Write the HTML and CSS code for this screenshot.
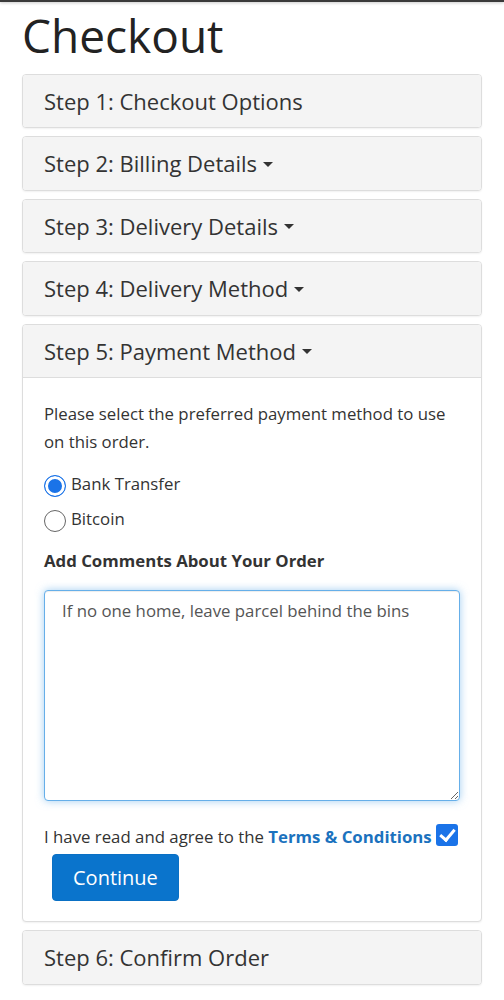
FILE: index.html
```html
<!DOCTYPE html>
<html lang="en">
<head>
<meta charset="utf-8">
<title>Checkout</title>
<link rel="stylesheet" href="styles.css">
</head>
<body>
<div class="topline"></div>
<main class="page">
  <h1 class="title">Checkout</h1>

  <section class="panel">
    <div class="panel-head">Step 1: Checkout Options</div>
  </section>
  <section class="panel">
    <div class="panel-head">Step 2: Billing Details <span class="caret"></span></div>
  </section>
  <section class="panel">
    <div class="panel-head">Step 3: Delivery Details <span class="caret"></span></div>
  </section>
  <section class="panel">
    <div class="panel-head">Step 4: Delivery Method <span class="caret"></span></div>
  </section>
  <section class="panel">
    <div class="panel-head panel-head-open">Step 5: Payment Method <span class="caret"></span></div>
    <div class="panel-body">
      <p class="intro">Please select the preferred payment method to use on this order.</p>
      <div class="radios">
        <label class="radio-row"><input class="radio" type="radio" name="pay" checked> <span>Bank Transfer</span></label>
        <label class="radio-row"><input class="radio" type="radio" name="pay"> <span>Bitcoin</span></label>
      </div>
      <div class="comment-label">Add Comments About Your Order</div>
      <textarea class="comment" rows="8">If no one home, leave parcel behind the bins</textarea>
      <div class="agree">I have read and agree to the <a class="terms" href="#">Terms &amp; Conditions</a> <input class="check" type="checkbox" checked></div>
      <div class="actions"><button class="btn" type="button">Continue</button></div>
    </div>
  </section>
  <section class="panel">
    <div class="panel-head">Step 6: Confirm Order</div>
  </section>
</main>
</body>
</html>
```
FILE: styles.css
```css
html, body {
  margin: 0;
  padding: 0;
  background: #fff;
}
body {
  font-family: "Open Sans", "Noto Sans", sans-serif;
  color: #333;
}
.topline {
  height: 2px;
  background: #3a3a3a;
  box-shadow: 0 1px 3px rgba(0, 0, 0, 0.25);
}
.page {
  padding: 0 22px 20px;
}
.title {
  font-size: 46px;
  font-weight: 400;
  line-height: 1.1;
  color: #222;
  margin: 8px 0 13px;
}
.panel {
  border: 1px solid #ddd;
  border-radius: 4px;
  background: #fff;
  box-shadow: 0 1px 2px rgba(0, 0, 0, 0.06);
  margin-bottom: 8px;
  overflow: hidden;
}
.panel-head {
  background: #f4f4f4;
  font-size: 22px;
  line-height: 24.5px;
  padding: 14px 21px;
  color: #333;
}
.panel-head-open {
  border-bottom: 1px solid #ddd;
}
.caret {
  display: inline-block;
  width: 0;
  height: 0;
  border-left: 5px solid transparent;
  border-right: 5px solid transparent;
  border-top: 5px solid #333;
  vertical-align: middle;
  position: relative;
  top: -2px;
}
.panel-body {
  padding: 22px 21px 20px;
  font-size: 16.8px;
  line-height: 28px;
}
.intro {
  margin: 0 0 14px;
}
.radios {
  display: flex;
  flex-direction: column;
  gap: 7px;
  margin-bottom: 14px;
}
.radio-row {
  display: flex;
  align-items: center;
  gap: 5px;
}
.radio {
  appearance: none;
  -webkit-appearance: none;
  width: 22px;
  height: 22px;
  margin: 4px 0 0;
  border: 1.5px solid #666;
  border-radius: 50%;
  background: #fff;
  box-sizing: border-box;
  flex: none;
}
.radio:checked {
  border-color: #1a73e8;
  background: #1a73e8;
  box-shadow: inset 0 0 0 3px #fff;
}
.comment-label {
  font-weight: 700;
  margin-bottom: 15px;
}
.comment {
  display: block;
  box-sizing: border-box;
  width: 100%;
  height: 211px;
  margin: 0 0 22px;
  padding: 8px 17px;
  border: 1px solid #66afe9;
  border-radius: 4px;
  box-shadow: inset 0 1px 1px rgba(0, 0, 0, 0.075), 0 0 8px rgba(102, 175, 233, 0.6);
  font-family: "Open Sans", "Noto Sans", sans-serif;
  font-size: 16.8px;
  line-height: 24px;
  color: #555;
  outline: none;
  resize: vertical;
}
.agree {
  color: #333;
  white-space: nowrap;
}
.terms {
  color: #1b72be;
  font-weight: 700;
  text-decoration: none;
}
.check {
  appearance: none;
  -webkit-appearance: none;
  width: 22px;
  height: 22px;
  margin: 1px 0 0;
  vertical-align: top;
  border-radius: 3px;
  background: #1a73e8;
  position: relative;
}
.check::after {
  content: "";
  position: absolute;
  left: 7px;
  top: 2px;
  width: 6px;
  height: 12px;
  border-right: 3px solid #fff;
  border-bottom: 3px solid #fff;
  transform: rotate(40deg);
}
.actions {
  margin-top: 3px;
  padding-left: 8px;
}
.btn {
  font-family: "Open Sans", "Noto Sans", sans-serif;
  font-size: 20px;
  line-height: 27px;
  padding: 9px 20px;
  border: 1px solid #0a70c4;
  border-radius: 4px;
  background: #0a74cc;
  color: #fff;
}
```
